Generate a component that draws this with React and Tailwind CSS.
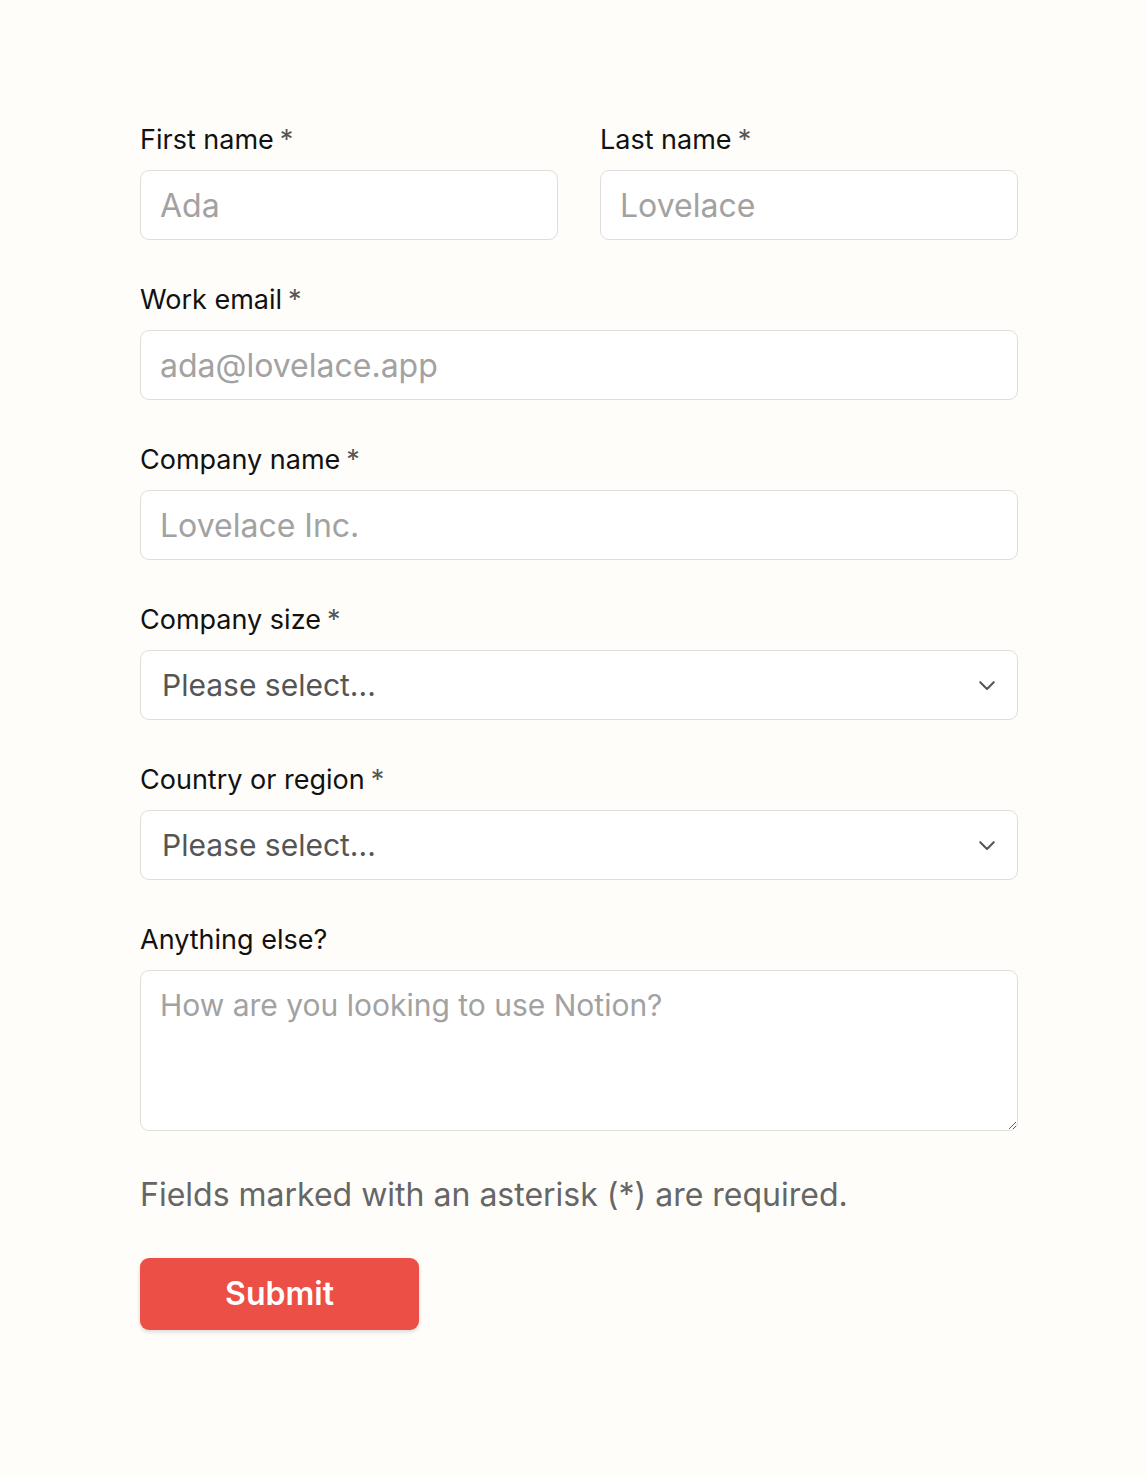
import React from "react"

function Label({ children, required }) {
  return (
    <label className="block text-[27px] leading-[34px] text-[#111] mb-[13px]">
      {children}
      {required && <span className="ml-[6px] text-[#555]">*</span>}
    </label>
  )
}

const inputCls =
  "w-full h-[70px] rounded-[9px] border-[1.5px] border-[#e0ded9] bg-white px-[19px] text-[32px] text-[#222] placeholder:text-[#a2a2a2] outline-none"

function Chevron() {
  return (
    <svg className="absolute right-[22px] top-1/2 -translate-y-1/2 w-[18px] h-[18px] pointer-events-none" viewBox="0 0 16 16" fill="none" stroke="#555" strokeWidth="1.8" strokeLinecap="round" strokeLinejoin="round">
      <path d="M2 5.5l6 6 6-6" />
    </svg>
  )
}

function Select() {
  return (
    <div className="relative">
      <select className="w-full h-[70px] appearance-none rounded-[9px] border-[1.5px] border-[#e0ded9] bg-white pl-[21px] text-[30px] text-[#555] outline-none">
        <option>Please select...</option>
      </select>
      <Chevron />
    </div>
  )
}

export default function App() {
  return (
    <div className="min-h-[1477px] bg-[#fffdf9] font-['Inter','Liberation_Sans',sans-serif]">
      <form className="w-[878px] ml-[140px] pt-[123px]" onSubmit={(e) => e.preventDefault()}>
        <div className="grid grid-cols-2 gap-x-[42px] mb-[43px]">
          <div>
            <Label required>First name</Label>
            <input className={inputCls} placeholder="Ada" />
          </div>
          <div>
            <Label required>Last name</Label>
            <input className={inputCls} placeholder="Lovelace" />
          </div>
        </div>

        <div className="mb-[43px]">
          <Label required>Work email</Label>
          <input className={inputCls} placeholder="ada@lovelace.app" />
        </div>

        <div className="mb-[43px]">
          <Label required>Company name</Label>
          <input className={inputCls} placeholder="Lovelace Inc." />
        </div>

        <div className="mb-[43px]">
          <Label required>Company size</Label>
          <Select />
        </div>

        <div className="mb-[43px]">
          <Label required>Country or region</Label>
          <Select />
        </div>

        <div>
          <Label>Anything else?</Label>
          <textarea
            className="block w-full h-[161px] rounded-[9px] border-[1.5px] border-[#e0ded9] bg-white px-[19px] pt-[15px] text-[30px] leading-[38px] text-[#222] placeholder:text-[#a2a2a2] outline-none"
            placeholder="How are you looking to use Notion?"
          />
        </div>

        <p className="mt-[42px] text-[32px] leading-[44px] text-[#666]">
          Fields marked with an asterisk (*) are required.
        </p>

        <button
          type="submit"
          className="mt-[41px] w-[279px] h-[72px] rounded-[9px] bg-[#eb4f45] text-white text-[32px] font-semibold shadow-[0_2px_4px_rgba(0,0,0,0.15)]"
        >
          Submit
        </button>
      </form>
    </div>
  )
}
